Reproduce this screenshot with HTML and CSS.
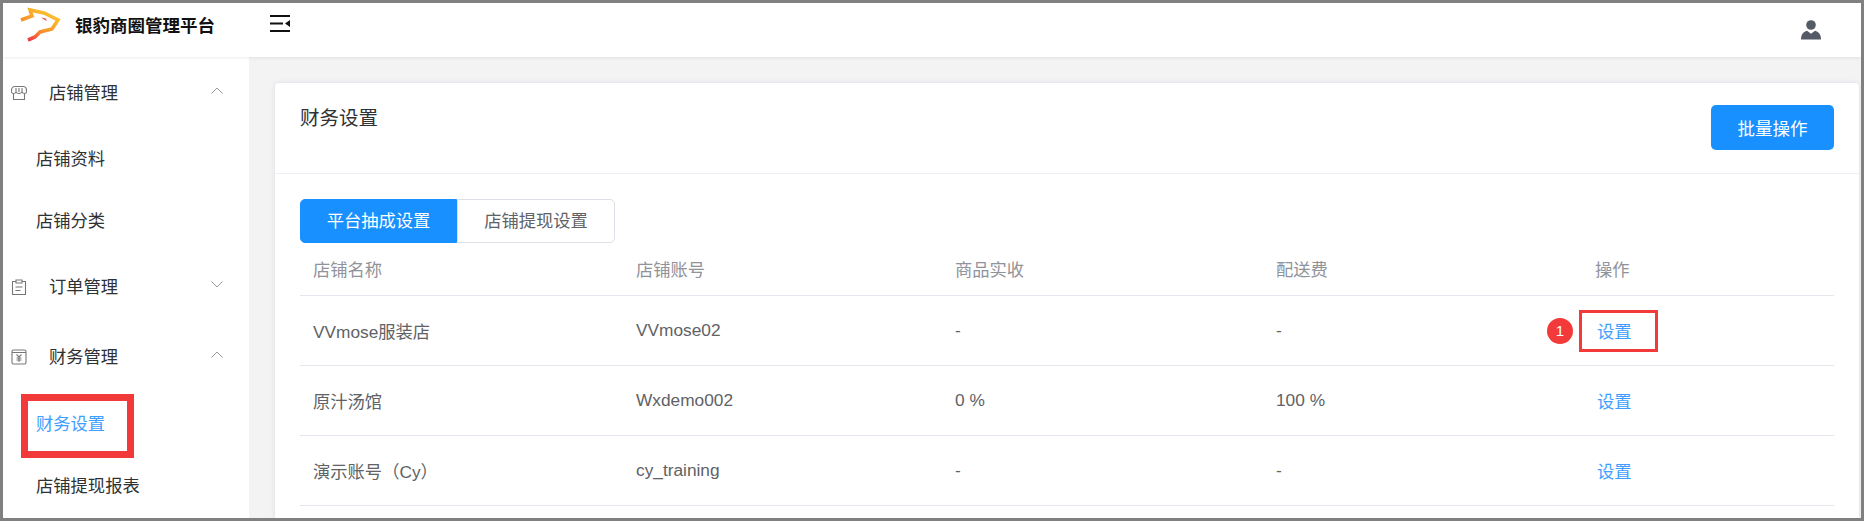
FILE: index.html
```html
<!DOCTYPE html>
<html lang="zh-CN">
	<head>
		<meta charset="UTF-8" />
		<meta name="viewport" content="width=device-width, initial-scale=1.0" />
		<title>财务设置</title>
		<link rel="stylesheet" href="styles.css">
	</head>
	<body>
		<div class="frame">
			<header class="topbar">
				<div class="brand">
					<svg class="logo" viewBox="0 0 60 45" width="60" height="45">
						<defs>
							<linearGradient id="fox" gradientUnits="userSpaceOnUse" x1="36" y1="6" x2="18" y2="38">
								<stop offset="0" stop-color="#fbc42e" />
								<stop offset="0.6" stop-color="#f98f2c" />
								<stop offset="1" stop-color="#ee3345" />
							</linearGradient>
						</defs>
						<path fill="none" stroke="url(#fox)" stroke-width="3.600" d="M11 17l11-4-2-6 14 3 14 7-6 9-12 3-5 5-7 3" />
						<path fill="#ee4a55" d="M31 14.500l5 1 .6 2.500z" />
					</svg>
					<span class="brand-name">银豹商圈管理平台</span>
				</div>
				<svg class="collapse" viewBox="0 0 20 17" width="20" height="17">
					<path fill="#111" d="M0 0h20v2H0zM0 7.500h13v2H0zM0 15h20v2H0zM20 5v7l-5-3.500z" />
				</svg>
				<svg class="avatar" viewBox="0 0 20 20" width="20" height="20">
					<circle cx="10" cy="5" r="4.800" fill="#555b66" />
					<path fill="#555b66" d="M0 19.500c0-5 2-7.500 6-8.800l4 3 4-3c4 1.300 6 3.800 6 8.800z" />
				</svg>
			</header>
			<div class="body">
				<aside class="sidebar">
					<div class="menu-title">
						<svg class="menu-icon" viewBox="0 0 16 16" width="16" height="16">
							<path fill="none" stroke="#777" stroke-width="1.100" d="M4 1.500h8c2 0 3.500 1.500 3.500 4v1.200c0 1-1 1.800-2 1.800s-2-.6-2.500-1.500c-.5.900-1.500 1.500-3 1.500s-2.500-.6-3-1.500C4.500 7.900 3.500 8.500 2.500 8.500s-2-.8-2-1.800V5.500c0-2.500 1.500-4 3.500-4zM2.500 8.500v6h11v-6M5 3v4M8 3v4M11 3v4" />
						</svg>
						<span class="menu-label">店铺管理</span>
						<svg class="chevron" viewBox="0 0 12 7" width="12" height="7"><path fill="none" stroke="#999" d="M.5 6.500L6 1l5.500 5.500" /></svg>
					</div>
					<div class="sub-item">店铺资料</div>
					<div class="sub-item">店铺分类</div>
					<div class="menu-title">
						<svg class="menu-icon" viewBox="0 0 16 16" width="16" height="16">
							<path fill="none" stroke="#777" stroke-width="1.100" d="M5 2.500H1.500v13h13v-13H11M5 1h6v3H5zM4.500 8h7M4.500 11.500h5" />
						</svg>
						<span class="menu-label">订单管理</span>
						<svg class="chevron" viewBox="0 0 12 7" width="12" height="7"><path fill="none" stroke="#999" d="M.5.500L6 6l5.500-5.500" /></svg>
					</div>
					<div class="menu-title">
						<svg class="menu-icon" viewBox="0 0 16 16" width="16" height="16">
							<path fill="none" stroke="#777" stroke-width="1.100" d="M2.500 1h11c.8 0 1.500.7 1.500 1.500v11c0 .8-.7 1.500-1.500 1.500h-11c-.8 0-1.500-.7-1.500-1.500v-11C1 1.700 1.700 1 2.500 1zM1 3.500h14M5.500 5.500L8 8l2.500-2.500M8 8v5M5.500 9h5M5.500 11h5" />
						</svg>
						<span class="menu-label">财务管理</span>
						<svg class="chevron" viewBox="0 0 12 7" width="12" height="7"><path fill="none" stroke="#999" d="M.5 6.500L6 1l5.500 5.500" /></svg>
					</div>
					<div class="sub-item active">财务设置</div>
					<div class="sub-item">店铺提现报表</div>
					<div class="mark mark-menu"></div>
				</aside>
				<main class="content">
					<section class="card">
						<div class="card-head">
							<div class="card-title">财务设置</div>
							<button class="btn-primary">批量操作</button>
						</div>
						<div class="card-body">
							<div class="tabs">
								<div class="tab active">平台抽成设置</div>
								<div class="tab">店铺提现设置</div>
							</div>
							<div class="table">
								<div class="row head">
									<div>店铺名称</div>
									<div>店铺账号</div>
									<div>商品实收</div>
									<div>配送费</div>
									<div class="head-action">操作</div>
								</div>
								<div class="row">
									<div>VVmose服装店</div>
									<div>VVmose02</div>
									<div>-</div>
									<div>-</div>
									<div class="action">
										<span class="badge">1</span>
										<span class="mark mark-link"></span>
										<a class="link">设置</a>
									</div>
								</div>
								<div class="row">
									<div>原汁汤馆</div>
									<div>Wxdemo002</div>
									<div>0 %</div>
									<div>100 %</div>
									<div class="action"><a class="link">设置</a></div>
								</div>
								<div class="row">
									<div>演示账号（Cy）</div>
									<div>cy_training</div>
									<div>-</div>
									<div>-</div>
									<div class="action"><a class="link">设置</a></div>
								</div>
							</div>
						</div>
					</section>
				</main>
			</div>
		</div>
	</body>
</html>
```

FILE: styles.css
```css
* {
	box-sizing: border-box;
}
html,
body {
	margin: 0;
	height: 100%;
	overflow: hidden;
	background-color: white;
}
body {
	font-family: "Liberation Sans", "Noto Sans CJK SC", sans-serif;
	font-size: 17.3px;
	color: #606266;
}
.frame {
	width: 1864px;
	height: 521px;
	border: 3px solid #808080;
	display: flex;
	flex-direction: column;
	overflow: hidden;
	background-color: white;
}
.topbar {
	height: 54px;
	flex: none;
	display: flex;
	align-items: flex-start;
	background-color: white;
	position: relative;
	z-index: 1;
	box-shadow: 0 1px 3px rgba(0, 0, 0, 0.08);
}
.brand {
	width: 267px;
	padding-left: 7px;
	display: flex;
	align-items: center;
	flex: none;
}
.logo {
	flex: none;
}
.brand-name {
	margin-left: 5px;
	font-size: 17.5px;
	font-weight: 700;
	color: #111;
	line-height: 44px;
}
.collapse {
	margin-top: 12px;
	flex: none;
}
.avatar {
	margin: 17px 40px 0 auto;
	flex: none;
}
.body {
	flex: 1;
	display: flex;
	min-height: 0;
}
.sidebar {
	width: 246px;
	flex: none;
	padding-top: 1px;
	background-color: white;
	position: relative;
}
.menu-title {
	height: 70px;
	padding: 0 26px 0 8px;
	display: flex;
	align-items: center;
	color: #303133;
}
.menu-icon {
	flex: none;
}
.menu-label {
	margin: -3px 0 0 22px;
	flex: 1;
}
.chevron {
	margin-top: -6px;
	flex: none;
}
.sub-item {
	height: 62px;
	padding-left: 33px;
	line-height: 62px;
	color: #303133;
}
.sub-item.active {
	margin-top: 1px;
	color: #409eff;
}
.mark {
	position: absolute;
	border-style: solid;
	border-color: #f33a3a;
}
.mark-menu {
	left: 18px;
	top: 337px;
	width: 113px;
	height: 64px;
	border-width: 7px;
}
.content {
	flex: 1;
	padding: 26px 2px 0 26px;
	background-color: #f3f3f4;
	min-width: 0;
}
.card {
	height: 100%;
	background-color: white;
	border-radius: 4px 4px 0 0;
	box-shadow: 0 0 4px rgba(200, 205, 220, 0.6);
}
.card-head {
	height: 91px;
	padding: 21px 25px 0 25px;
	display: flex;
	justify-content: space-between;
	align-items: flex-start;
	border-bottom: 1px solid #ebeef5;
}
.card-title {
	color: #303133;
	line-height: 28px;
	font-size: 19.5px;
}
.btn-primary {
	width: 123px;
	height: 45px;
	margin-top: 1px;
	border: none;
	border-radius: 5px;
	background-color: #1890ff;
	color: white;
	font-family: inherit;
	font-size: 17.5px;
}
.card-body {
	padding: 25px 25px 0 25px;
}
.tabs {
	display: flex;
	height: 44px;
}
.tab {
	width: 158px;
	line-height: 42px;
	text-align: center;
	border: 1px solid #dcdfe6;
	border-radius: 0 5px 5px 0;
	border-left: 1px solid #dcdfe6;
}
.tab.active {
	width: 157px;
	background-color: #1890ff;
	border-color: #1890ff;
	color: white;
	border-radius: 5px 0 0 5px;
}
.row {
	height: 70px;
	display: grid;
	grid-template-columns: 323px 319px 321px 321px 1fr;
	padding-left: 13px;
	align-items: center;
	border-bottom: 1px solid #e4e7ed;
}
.row.head {
	height: 53px;
	padding-bottom: 2px;
	color: #909399;
}
.head-action {
	margin-left: -2px;
}
.action {
	position: relative;
}
.link {
	color: #409eff;
	position: relative;
}
.badge {
	position: absolute;
	left: -50px;
	top: 0;
	width: 26px;
	height: 26px;
	border-radius: 50%;
	background-color: #f33a3a;
	color: white;
	font-size: 15px;
	line-height: 26px;
	text-align: center;
}
.mark-link {
	left: -18px;
	top: -8px;
	width: 79px;
	height: 42px;
	border-width: 3px;
}
```
